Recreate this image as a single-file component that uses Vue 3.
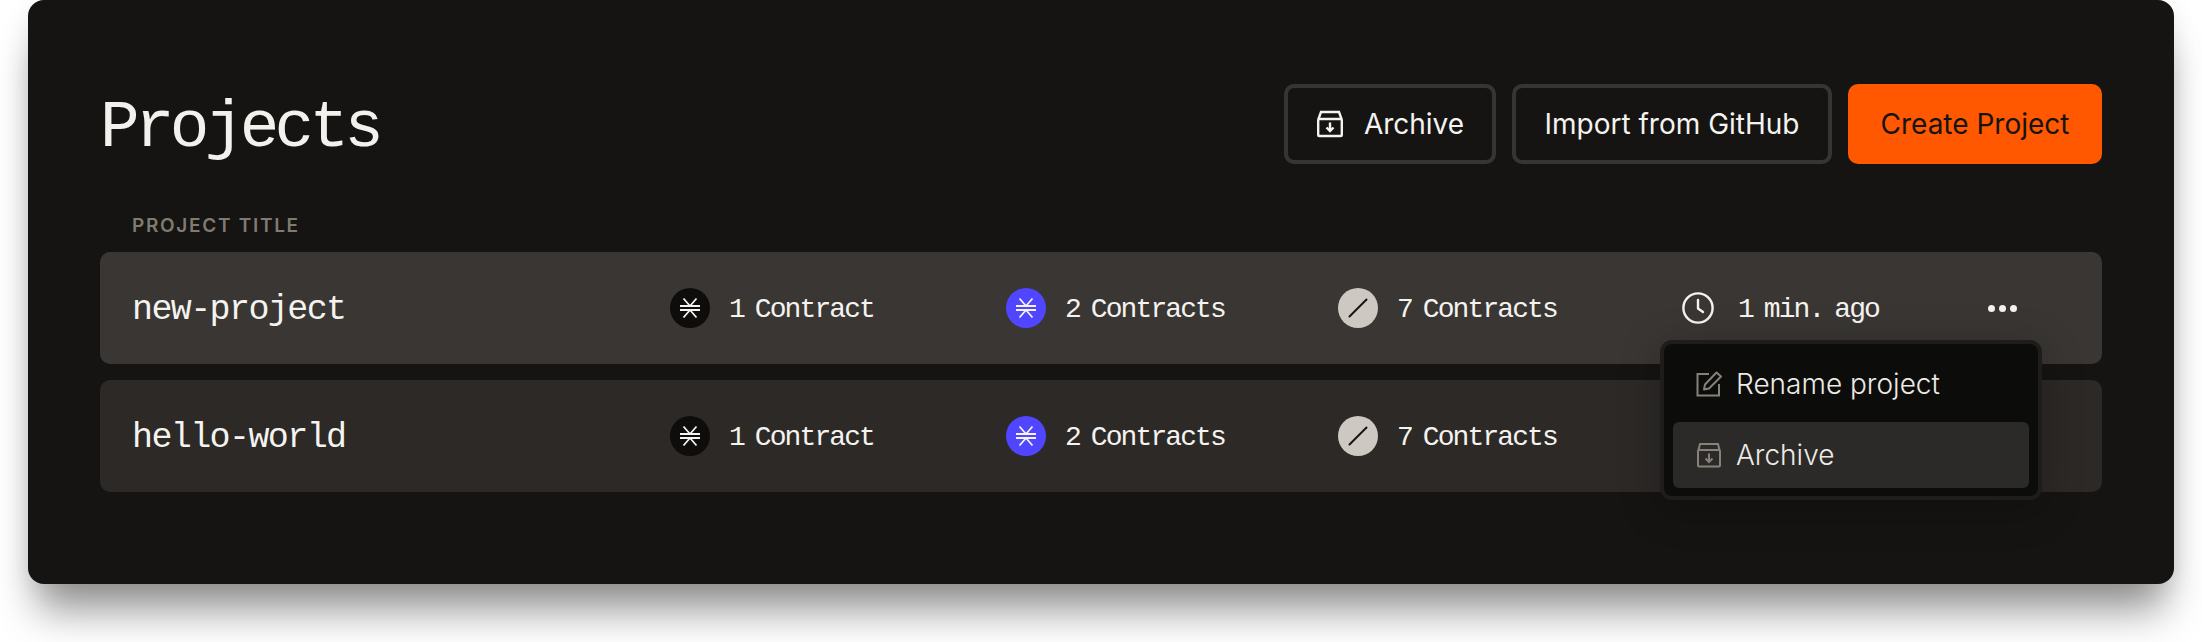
<template>
  <div class="page">
    <section class="card">
      <header class="head">
        <h1 class="title">Projects</h1>
        <div class="actions">
          <button class="btn btn-outline btn-archive">
            <svg class="btn-icon" viewBox="0 0 28 28" fill="none" stroke="currentColor" stroke-width="2.4">
              <path d="M2.500 9 5 2h18l2.500 7" />
              <rect x="2.200" y="9" width="23.600" height="17" rx="1" />
              <path d="M14 12.500v8M10.500 17.500l3.500 3.500 3.500-3.500" />
            </svg>
            Archive
          </button>
          <button class="btn btn-outline btn-import">Import from GitHub</button>
          <button class="btn btn-primary">Create Project</button>
        </div>
      </header>

      <div class="col-label">PROJECT TITLE</div>

      <div class="rows">
        <div v-for="p in projects" :key="p.name" class="row" :class="{ active: p.active }">
          <span class="name">{{ p.name }}</span>
          <span v-for="c in p.chains" :key="c.kind" class="cell">
            <span class="chain" :class="'chain-' + c.kind">
              <svg v-if="c.kind !== 'slash'" viewBox="0 0 40 40" fill="none" stroke="currentColor">
                <path stroke-width="2" d="M10 18h20M10 22h20" />
                <path stroke-width="1.800" d="M13.500 10.500 20 18l6.500-7.500M13.500 29.500 20 22l6.500 7.500" />
              </svg>
              <svg v-else viewBox="0 0 40 40" fill="none" stroke="currentColor">
                <path stroke-width="2" stroke-linecap="round" d="M11.500 28.500 28.500 11.500" />
              </svg>
            </span>
            <span class="mono">{{ c.label }}</span>
          </span>
          <span v-if="p.time" class="cell">
            <svg class="clock" viewBox="0 0 32 32" fill="none" stroke="currentColor" stroke-width="2.400">
              <circle cx="16" cy="16" r="14.600" />
              <path stroke-linecap="round" stroke-linejoin="round" d="M16 8v8.500l5 3.500" />
            </svg>
            <span class="mono">{{ p.time }}</span>
          </span>
          <span v-if="p.active" class="dots"><i></i><i></i><i></i></span>

          <div v-if="p.active" class="menu">
            <div class="menu-item">
              <svg class="menu-icon" viewBox="0 0 26 26" fill="none" stroke="currentColor" stroke-width="2">
                <path d="M13 3H1.500v21.500H23V13" />
                <path stroke-linejoin="round" d="M8 18.500l1-5L20.500 1.500l4.500 4L13 17.500z" />
              </svg>
              Rename project
            </div>
            <div class="menu-item hover">
              <svg class="menu-icon" viewBox="0 0 26 26" fill="none" stroke="currentColor" stroke-width="2">
                <path d="M2.500 8 4 2h18l1.500 6" />
                <rect x="2" y="8" width="22" height="16.500" rx="1" />
                <path d="M13 11.500v8M9.500 16.500l3.500 3.500 3.500-3.500" />
              </svg>
              Archive
            </div>
          </div>
        </div>
      </div>
    </section>
  </div>
</template>

<script setup>
const chains = [
  { kind: 'dark', label: '1 Contract' },
  { kind: 'blue', label: '2 Contracts' },
  { kind: 'slash', label: '7 Contracts' }
]

const projects = [
  { name: 'new-project', chains, time: '1 min. ago', active: true },
  { name: 'hello-world', chains }
]
</script>

<style>
html,
body {
  margin: 0;
  background: #fff;
  overflow: hidden;
}
</style>

<style scoped>
.page {
  width: 2202px;
  height: 642px;
  padding: 0 28px;
  box-sizing: border-box;
  font-family: Inter, "Liberation Sans", sans-serif;
}

.card {
  box-sizing: border-box;
  height: 584px;
  padding: 84px 72px 0;
  background: #151412;
  border-radius: 16px;
  box-shadow: 0 36px 40px -10px rgba(0, 0, 0, 0.42), 0 4px 24px rgba(0, 0, 0, 0.08);
}

.head {
  display: flex;
  justify-content: space-between;
  align-items: center;
  height: 80px;
}

.title {
  margin: 8px 0 0;
  font-family: "Liberation Mono", monospace;
  font-size: 66px;
  font-weight: 400;
  letter-spacing: -4.700px;
  color: #f2f1ed;
}

.actions {
  display: flex;
  gap: 16px;
}

.btn {
  display: flex;
  align-items: center;
  justify-content: center;
  box-sizing: border-box;
  height: 80px;
  border-radius: 10px;
  font-family: inherit;
  font-size: 28px;
  font-weight: 400;
}

.btn-outline {
  background: transparent;
  border: 4px solid #363533;
  color: #f4f3ef;
}

.btn-archive {
  width: 212px;
  gap: 20px;
}

.btn-import {
  width: 320px;
}

.btn-primary {
  width: 254px;
  border: 0;
  background: #ff5800;
  color: #151412;
}

.btn-icon {
  width: 28px;
  height: 28px;
}

.col-label {
  margin: 52px 0 0 32px;
  height: 36px;
  font-size: 19px;
  font-weight: 600;
  line-height: 20px;
  letter-spacing: 1.700px;
  color: #7f7b72;
}

.rows {
  display: flex;
  flex-direction: column;
  gap: 16px;
}

.row {
  position: relative;
  display: grid;
  grid-template-columns: 538px 336px 332px 342px 308px 1fr;
  align-items: center;
  height: 112px;
  padding: 0 32px;
  background: #2c2927;
  border-radius: 10px;
  color: #f4f3ef;
}

.row.active {
  background: #393633;
}

.name {
  padding-top: 3px;
  font-family: "Liberation Mono", monospace;
  font-size: 35px;
  letter-spacing: -1.600px;
}

.cell {
  display: flex;
  align-items: center;
  gap: 19px;
}

.mono {
  padding-top: 3px;
  font-family: "Liberation Mono", monospace;
  font-size: 28px;
  letter-spacing: -1.900px;
  word-spacing: -4px;
}

.chain {
  display: block;
  width: 40px;
  height: 40px;
  border-radius: 50%;
}

.chain svg {
  display: block;
  width: 40px;
  height: 40px;
}

.chain-dark {
  background: #0e0d0c;
  color: #f4f3ef;
}

.chain-blue {
  background: #5046ff;
  color: #f4f3ef;
}

.chain-slash {
  background: #cdc8c1;
  color: #151412;
}

.clock {
  width: 32px;
  height: 32px;
  margin: 0 5px 0 2px;
}

.dots {
  display: flex;
  gap: 4px;
}

.dots i {
  width: 7px;
  height: 7px;
  border-radius: 50%;
  background: #f4f3ef;
}

.menu {
  position: absolute;
  z-index: 2;
  top: 88px;
  left: 1560px;
  box-sizing: border-box;
  width: 382px;
  height: 160px;
  padding: 7px 9px 9px;
  background: #0c0c0b;
  border: 4px solid #1e1d1b;
  border-radius: 12px;
  box-shadow: 0 8px 40px rgba(0, 0, 0, 0.25);
}

.menu-item {
  display: flex;
  align-items: center;
  gap: 14px;
  height: 66px;
  padding: 0 23px;
  border-radius: 6px;
  font-size: 28px;
  font-weight: 300;
  color: #eceae5;
}

.menu-item.hover {
  margin-top: 5px;
  background: #2b2a28;
}

.menu-icon {
  width: 26px;
  height: 26px;
  color: #86827a;
}
</style>
